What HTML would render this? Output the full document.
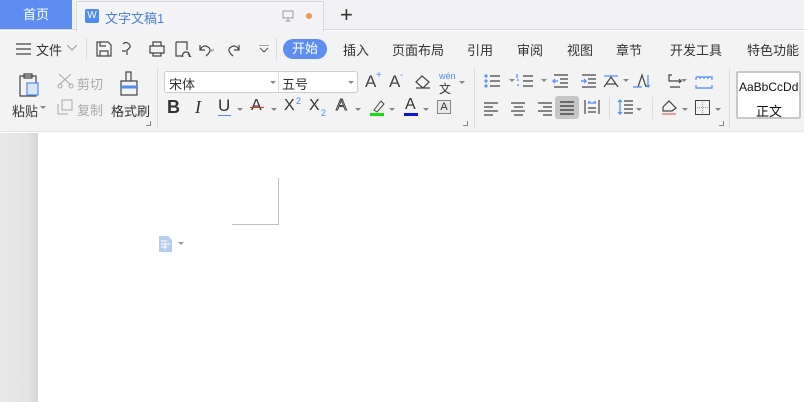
<!DOCTYPE html>
<html><head><meta charset="utf-8"><style>
*{margin:0;padding:0;box-sizing:border-box}
body{width:804px;height:402px;overflow:hidden;background:#fff;font-family:"Liberation Sans","Noto Sans CJK SC",sans-serif;font-size:12px;color:#333;position:relative}
.a{position:absolute;white-space:nowrap}
.ic{position:absolute}
</style></head><body>
<!-- tab bar -->
<div class="a" style="left:0;top:0;width:804px;height:30px;background:#f1f1f3;border-bottom:1px solid #d8d8de"></div>
<div class="a" style="left:0;top:0;width:72px;height:29px;background:#5d8df0;color:#fff;font-size:13px;line-height:30px;text-align:center">首页</div>
<div class="a" style="left:76px;top:1px;width:248px;height:30px;background:#f4f4f6;border:1px solid #d8d8de;border-bottom:none"></div>
<div class="a" style="left:85px;top:9px;width:14px;height:14px;background:#4e8cef;border-radius:2px;color:#fff;font-size:10px;line-height:14px;text-align:center">W</div>
<div class="a" style="left:105px;top:8px;font-size:13px;color:#4a7fd8">文字文稿1</div>
<svg class="ic" style="left:282px;top:10px" width="12" height="12"><rect x="1" y="1" width="10" height="7" fill="none" stroke="#999"/><path d="M6 8v3M3.5 11h5" stroke="#999"/></svg>
<div class="a" style="left:306px;top:13px;width:6px;height:6px;border-radius:3px;background:#e99a55"></div>
<div class="a" style="left:340px;top:2px;font-size:22px;color:#333;line-height:26px">+</div>
<!-- toolbar bg -->
<div class="a" style="left:0;top:31px;width:804px;height:101px;background:#f3f3f4;border-bottom:1px solid #e2e2e2"></div>
<!-- menu row -->
<svg class="ic" style="left:16px;top:43px" width="15" height="12"><path d="M0 1h15M0 6h15M0 11h15" stroke="#444" stroke-width="1.3"/></svg>
<div class="a" style="left:36px;top:40px;font-size:13px">文件</div>
<svg class="ic" style="left:67px;top:45px" width="10" height="6"><path d="M0 0l5 5 5-5" fill="none" stroke="#999"/></svg>
<div class="a" style="left:86px;top:38px;width:1px;height:22px;background:#ddd"></div>
<svg class="ic" style="left:96px;top:41px" width="160" height="16" fill="none" stroke="#444" stroke-width="1.2">
<path d="M1 1h11l3 3v11H1z M4 15v-5h8v5 M4 1v4h6"/>
<path d="M27 3q3-3 6 0t-2 6v5 M26 10h4"/>
<path d="M54 5h14v7H54z M57 5V1h8v4 M57 12v3h8v-3"/>
<path d="M80 1h11v8 M80 1v14h6 M90 11a3.5 3.5 0 1 0 0.1 0z M92 13l3 3"/>
<path d="M104 4v5h5 M104 9q3-6 8-3t-2 9"/>
<path d="M114 8l2 2 2-2" stroke="#999"/>
<path d="M143 4v5h-5 M143 9q-3-6-8-3t2 9"/>
</svg>
<svg class="ic" style="left:259px;top:45px" width="10" height="8"><path d="M0 0h10M1 3l4 4 4-4" fill="none" stroke="#555"/></svg>
<div class="a" style="left:276px;top:38px;width:1px;height:22px;background:#ddd"></div>
<div class="a" style="left:283px;top:39px;width:44px;height:20px;border-radius:10px;background:#5d8df0;color:#fff;font-size:13px;line-height:20px;text-align:center">开始</div>
<div class="a" style="left:343px;top:40px;font-size:13px">插入</div>
<div class="a" style="left:392px;top:40px;font-size:13px">页面布局</div>
<div class="a" style="left:467px;top:40px;font-size:13px">引用</div>
<div class="a" style="left:517px;top:40px;font-size:13px">审阅</div>
<div class="a" style="left:567px;top:40px;font-size:13px">视图</div>
<div class="a" style="left:616px;top:40px;font-size:13px">章节</div>
<div class="a" style="left:670px;top:40px;font-size:13px">开发工具</div>
<div class="a" style="left:747px;top:40px;font-size:13px">特色功能</div>
<!-- ribbon clipboard -->
<svg class="ic" style="left:18px;top:72px" width="24" height="26" fill="none" stroke="#444" stroke-width="1.2"><path d="M2 4h16v20H2z M6 2h8v4H6z"/><rect x="9" y="11" width="11" height="12" fill="#dbe6f5" stroke="#4e8cef"/></svg>
<div class="a" style="left:12px;top:101px;font-size:13px">粘贴</div>
<svg class="ic" style="left:40px;top:106px" width="6" height="4"><path d="M0 0h6L3 3z" fill="#888"/></svg>
<svg class="ic" style="left:57px;top:73px" width="18" height="16" fill="none" stroke="#aaa"><path d="M2 1l12 11M14 1L2 12"/><circle cx="3" cy="13" r="2"/><circle cx="14" cy="13" r="2"/></svg>
<div class="a" style="left:77px;top:74px;font-size:13px;color:#aaa">剪切</div>
<svg class="ic" style="left:57px;top:99px" width="16" height="16" fill="none" stroke="#aaa"><path d="M5 1h10v10H5z M1 5v10h10"/></svg>
<div class="a" style="left:77px;top:100px;font-size:13px;color:#aaa">复制</div>
<svg class="ic" style="left:119px;top:71px" width="20" height="26" fill="none" stroke="#444" stroke-width="1.2"><path d="M7 1h5v9H7z M2 10h16v14H2z"/><path d="M2 16h16" stroke="#4e8cef" stroke-width="3"/></svg>
<div class="a" style="left:111px;top:101px;font-size:13px">格式刷</div>
<div class="a" style="left:146px;top:121px;width:5px;height:5px;border-right:1px solid #888;border-bottom:1px solid #888"></div>
<div class="a" style="left:157px;top:68px;width:1px;height:60px;background:#ddd"></div>
<!-- font group -->
<div class="a" style="left:164px;top:71px;width:194px;height:22px;border:1px solid #ccc;border-radius:3px;background:#fff"></div>
<div class="a" style="left:278px;top:72px;width:1px;height:20px;background:#ddd"></div>
<div class="a" style="left:169px;top:74px;font-size:13px">宋体</div>
<div class="a" style="left:282px;top:74px;font-size:13px">五号</div>
<svg class="ic" style="left:270px;top:81px" width="6" height="4"><path d="M0 0h6L3 3z" fill="#888"/></svg>
<svg class="ic" style="left:348px;top:81px" width="6" height="4"><path d="M0 0h6L3 3z" fill="#888"/></svg>
<div class="a" style="left:365px;top:72px;font-size:17px;color:#444">A</div><div class="a" style="left:376px;top:70px;font-size:10px;color:#4e8cef">+</div>
<div class="a" style="left:389px;top:72px;font-size:17px;color:#444">A</div><div class="a" style="left:400px;top:70px;font-size:10px;color:#4e8cef">-</div>
<svg class="ic" style="left:414px;top:74px" width="18" height="16" fill="none" stroke="#444" stroke-width="1.2"><path d="M8 2l7 6-6 6-7-6z M2 14h14"/></svg>
<div class="a" style="left:439px;top:71px;font-size:9px;color:#4e8cef">wén</div><div class="a" style="left:439px;top:80px;font-size:12px">文</div>
<svg class="ic" style="left:459px;top:81px" width="6" height="4"><path d="M0 0h6L3 3z" fill="#888"/></svg>
<div class="a" style="left:167px;top:97px;font-size:18px;font-weight:bold;color:#333">B</div>
<div class="a" style="left:195px;top:97px;font-size:18px;font-style:italic;font-family:'Liberation Serif',serif">I</div>
<div class="a" style="left:218px;top:96px;font-size:17px">U</div><div class="a" style="left:218px;top:115px;width:13px;height:1px;background:#4e8cef"></div>
<svg class="ic" style="left:237px;top:108px" width="6" height="4"><path d="M0 0h6L3 3z" fill="#888"/></svg>
<div class="a" style="left:251px;top:97px;font-size:16px">A</div><div class="a" style="left:250px;top:107px;width:14px;height:1px;background:#c33"></div>
<svg class="ic" style="left:271px;top:108px" width="6" height="4"><path d="M0 0h6L3 3z" fill="#888"/></svg>
<div class="a" style="left:284px;top:97px;font-size:16px">X</div><div class="a" style="left:296px;top:96px;font-size:9px;color:#4e8cef">2</div>
<div class="a" style="left:309px;top:97px;font-size:16px">X</div><div class="a" style="left:321px;top:108px;font-size:9px;color:#4e8cef">2</div>
<div class="a" style="left:336px;top:97px;font-size:16px;color:#fff;-webkit-text-stroke:1px #444">A</div>
<svg class="ic" style="left:355px;top:108px" width="6" height="4"><path d="M0 0h6L3 3z" fill="#888"/></svg>
<svg class="ic" style="left:370px;top:99px" width="16" height="18"><path d="M4 11l7-9 3 3-7 8z" fill="none" stroke="#444"/><rect x="0" y="14" width="14" height="3" fill="#10e010"/></svg>
<svg class="ic" style="left:389px;top:108px" width="6" height="4"><path d="M0 0h6L3 3z" fill="#888"/></svg>
<div class="a" style="left:405px;top:96px;font-size:16px">A</div><div class="a" style="left:404px;top:113px;width:14px;height:3px;background:#1414e0"></div>
<svg class="ic" style="left:423px;top:108px" width="6" height="4"><path d="M0 0h6L3 3z" fill="#888"/></svg>
<div class="a" style="left:437px;top:100px;width:14px;height:14px;border:1px solid #888;background:#e8e8e8;font-size:11px;text-align:center;line-height:12px">A</div>
<div class="a" style="left:463px;top:121px;width:5px;height:5px;border-right:1px solid #888;border-bottom:1px solid #888"></div>
<div class="a" style="left:474px;top:68px;width:1px;height:60px;background:#ddd"></div>
<!-- paragraph -->
<svg class="ic" style="left:484px;top:73px" width="230" height="48" fill="none" stroke="#444" stroke-width="1.2">
<g stroke="#4e8cef"><circle cx="2" cy="3" r="1"/><circle cx="2" cy="8" r="1"/><circle cx="2" cy="13" r="1"/></g><path d="M6 3h10M6 8h10M6 13h10"/>
<path d="M39 3h10M39 8h10M39 13h10"/><path d="M33 1v4M33 7h2M33 12h2" stroke="#4e8cef"/>
<path d="M70 2h14M76 6h8M76 10h8M70 14h14"/><path d="M74 8h-5l2-2M69 8l2 2" stroke="#4e8cef"/>
<path d="M98 2h14M104 6h8M104 10h8M98 14h14"/><path d="M97 8h5l-2-2M102 8l-2 2" stroke="#4e8cef"/>
<path d="M120 14l7-10 7 10M122 11h10"/><path d="M120 3h14" stroke="#4e8cef"/>
<path d="M154 14l4-12 4 12" /><path d="M149 14h9M164 2v12l-2-2M164 14l2-2" stroke="#4e8cef"/>
<path d="M188 2h-3v6h12l-2-2M197 8l-2 2M186 14h10"/>
<path d="M212 4v3M212 4h16v3M216 4v2M220 4v2M224 4v2M228 4v3M212 12v3h16v-3" stroke="#4e8cef"/>
<path d="M0 30h14M0 34h9M0 38h14M0 42h9"/>
<path d="M27 30h14M30 34h9M27 38h14M30 42h9"/>
<path d="M54 30h14M59 34h9M54 38h14M59 42h9"/>
</svg>
<svg class="ic" style="left:509px;top:79px" width="6" height="4"><path d="M0 0h6L3 3z" fill="#888"/></svg>
<svg class="ic" style="left:541px;top:79px" width="6" height="4"><path d="M0 0h6L3 3z" fill="#888"/></svg>
<svg class="ic" style="left:623px;top:79px" width="6" height="4"><path d="M0 0h6L3 3z" fill="#888"/></svg>
<svg class="ic" style="left:681px;top:79px" width="6" height="4"><path d="M0 0h6L3 3z" fill="#888"/></svg>
<div class="a" style="left:555px;top:96px;width:24px;height:23px;background:#c6c6c6;border-radius:3px"></div>
<svg class="ic" style="left:560px;top:101px" width="14" height="14" stroke="#333" stroke-width="1.3"><path d="M0 1h14M0 5h14M0 9h14M0 13h14"/></svg>
<svg class="ic" style="left:584px;top:99px" width="16" height="16" fill="none" stroke="#444" stroke-width="1.2"><path d="M1 1v14M15 1v14M4 9h8M4 13h8"/><path d="M4 4h8M4 4l2-2M12 4l-2-2" stroke="#4e8cef"/></svg>
<div class="a" style="left:609px;top:97px;width:1px;height:22px;background:#ddd"></div>
<svg class="ic" style="left:617px;top:99px" width="16" height="16" fill="none" stroke="#444" stroke-width="1.2"><path d="M7 2h9M7 6h9M7 10h9M7 14h9"/><path d="M3 1v14M1 3l2-2 2 2M1 13l2 2 2-2" stroke="#4e8cef"/></svg>
<svg class="ic" style="left:636px;top:108px" width="6" height="4"><path d="M0 0h6L3 3z" fill="#888"/></svg>
<div class="a" style="left:652px;top:97px;width:1px;height:22px;background:#ddd"></div>
<svg class="ic" style="left:661px;top:99px" width="18" height="17" fill="none" stroke="#444" stroke-width="1.2"><path d="M2 8l6-6 7 7-4 3H2z"/><path d="M1 15h14" stroke="#e06060"/></svg>
<svg class="ic" style="left:682px;top:108px" width="6" height="4"><path d="M0 0h6L3 3z" fill="#888"/></svg>
<svg class="ic" style="left:695px;top:100px" width="15" height="15" fill="none" stroke="#444"><rect x="0.5" y="0.5" width="14" height="14"/><path d="M7.5 2v11M2 7.5h11" stroke="#999" stroke-dasharray="1 1"/></svg>
<svg class="ic" style="left:715px;top:108px" width="6" height="4"><path d="M0 0h6L3 3z" fill="#888"/></svg>
<div class="a" style="left:719px;top:121px;width:5px;height:5px;border-right:1px solid #888;border-bottom:1px solid #888"></div>
<div class="a" style="left:729px;top:68px;width:1px;height:60px;background:#ddd"></div>
<!-- style box -->
<div class="a" style="left:736px;top:71px;width:65px;height:48px;border:2px solid #c8c8c8;background:#fff;border-radius:2px"></div>
<div class="a" style="left:739px;top:80px;font-size:12px;color:#111">AaBbCcDd</div>
<div class="a" style="left:756px;top:101px;font-size:13px;color:#111">正文</div>
<!-- document area -->
<div class="a" style="left:0;top:133px;width:38px;height:269px;background:linear-gradient(to right,#e8e8e8 0,#e4e4e4 28px,#d4d4d4 38px)"></div>
<div class="a" style="left:232px;top:178px;width:47px;height:47px;border-right:1px solid #c0c0c0;border-bottom:1px solid #c0c0c0"></div>
<svg class="ic" style="left:159px;top:236px" width="14" height="16"><path d="M0 0h9l4 4v12H0z" fill="#b7cdec"/><path d="M2 5h6M2 8h9M2 11h6M6 8v5" stroke="#fff"/></svg>
<svg class="ic" style="left:178px;top:242px" width="6" height="4"><path d="M0 0h6L3 3z" fill="#999"/></svg>
</body></html>
